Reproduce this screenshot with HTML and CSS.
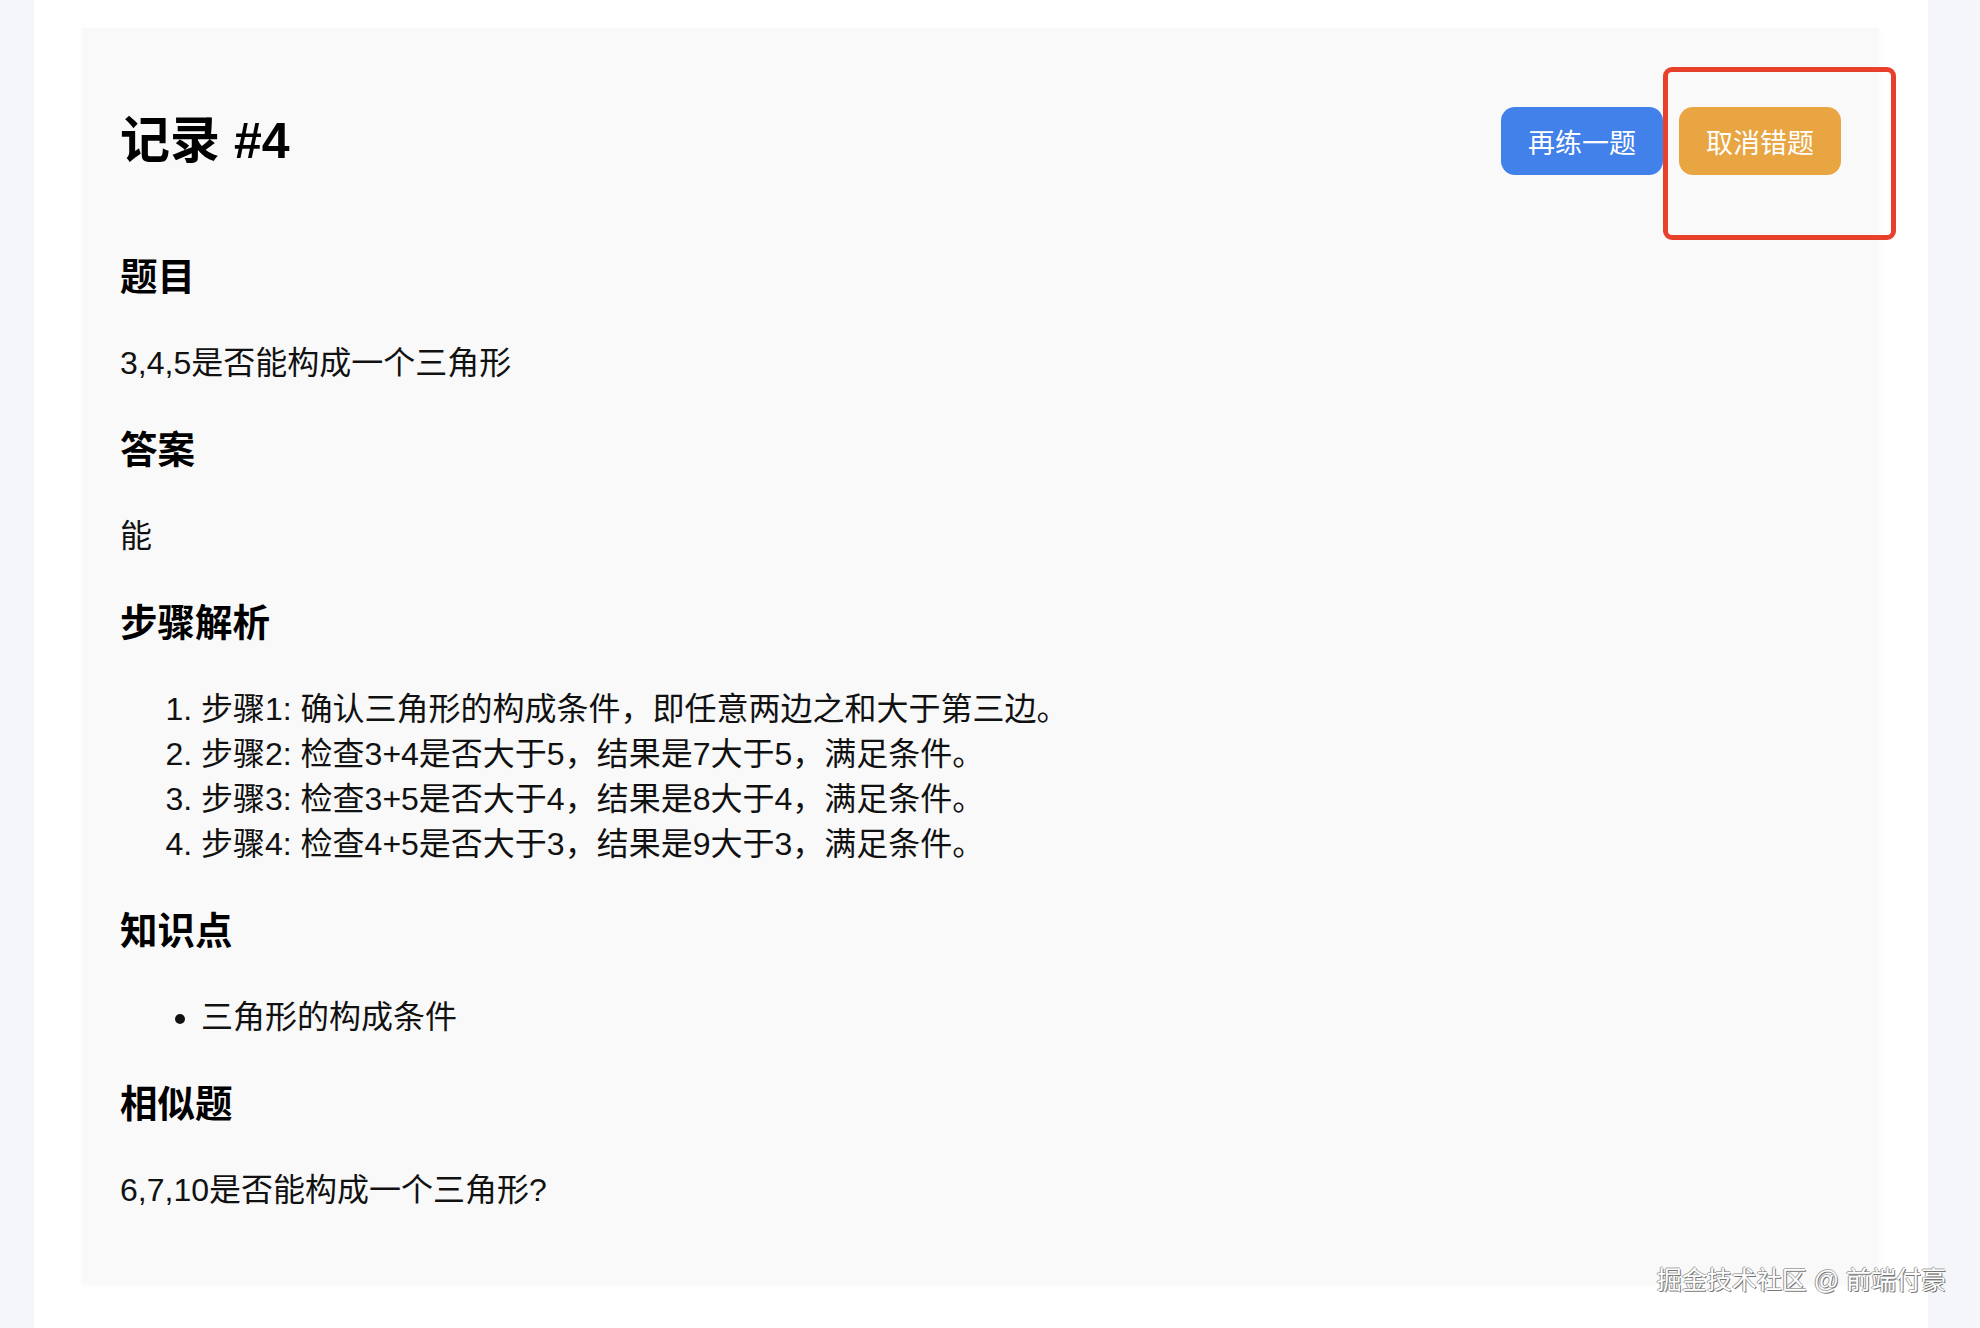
FILE: index.html
```html
<!DOCTYPE html>
<html lang="zh-CN">
<head>
<meta charset="utf-8">
<title>记录 #4</title>
<link rel="stylesheet" href="styles.css">
</head>
<body>
<div class="page">
  <div class="card">
    <div class="header">
      <h2 class="title">记录 #4</h2>
      <div class="actions">
        <button class="btn btn-blue">再练一题</button>
        <button class="btn btn-orange">取消错题</button>
        <div class="annotation"></div>
      </div>
    </div>
    <h3>题目</h3>
    <p>3,4,5是否能构成一个三角形</p>
    <h3>答案</h3>
    <p>能</p>
    <h3>步骤解析</h3>
    <ol>
      <li>步骤1: 确认三角形的构成条件，即任意两边之和大于第三边。</li>
      <li>步骤2: 检查3+4是否大于5，结果是7大于5，满足条件。</li>
      <li>步骤3: 检查3+5是否大于4，结果是8大于4，满足条件。</li>
      <li>步骤4: 检查4+5是否大于3，结果是9大于3，满足条件。</li>
    </ol>
    <h3>知识点</h3>
    <ul>
      <li>三角形的构成条件</li>
    </ul>
    <h3>相似题</h3>
    <p>6,7,10是否能构成一个三角形?</p>
  </div>
  <div class="watermark">掘金技术社区 @ 前端付豪</div>
</div>
</body>
</html>
```

FILE: styles.css
```css
* { box-sizing: border-box; }

html, body {
  margin: 0;
  padding: 0;
}

body {
  background: #f4f6fa;
  font-family: "Liberation Sans", "Noto Sans CJK SC", sans-serif;
  color: #111;
  width: 1980px;
  height: 1328px;
  overflow: hidden;
}

.page {
  position: relative;
  margin-left: 34px;
  width: 1894px;
  height: 1328px;
  background: #ffffff;
  padding: 28px 49px 0 48px;
}

.card {
  background: #f9f9fa;
  box-shadow: 0 1px 6px rgba(0, 0, 0, 0.03);
  padding: 79px 38px 28px 38px;
}

.header {
  display: flex;
  align-items: center;
  justify-content: space-between;
  height: 68px;
  margin-bottom: 81px;
}

.title {
  margin: 0;
  font-size: 50px;
  line-height: 56px;
  font-weight: 700;
  color: #000;
}

.actions {
  position: relative;
  display: flex;
  gap: 16px;
}

.btn {
  height: 68px;
  width: 162px;
  border: none;
  border-radius: 14px;
  color: #fff;
  font-family: "Liberation Sans", "Noto Sans CJK SC", sans-serif;
  font-size: 27px;
  padding: 0;
}

.btn-blue { background: #4181e9; }
.btn-orange { background: #e8a542; }

.annotation {
  position: absolute;
  left: 162px;
  top: -40px;
  width: 233px;
  height: 173px;
  border: 5px solid #e8412b;
  border-radius: 9px;
}

h3 {
  font-size: 37.5px;
  line-height: 42px;
  font-weight: 700;
  margin: 43px 0;
  color: #000;
}

p, li {
  font-size: 32px;
  line-height: 45px;
}

p {
  margin: 43px 0;
}

ol, ul {
  margin: 43px 0;
  padding-left: 81px;
}

.watermark {
  position: absolute;
  right: -18px;
  top: 1264px;
  font-size: 25px;
  line-height: 32px;
  color: #ffffff;
  text-shadow: 1px 1px 0 #777, -1px 0 0 #999, 0 -1px 0 #aaa;
}
```
